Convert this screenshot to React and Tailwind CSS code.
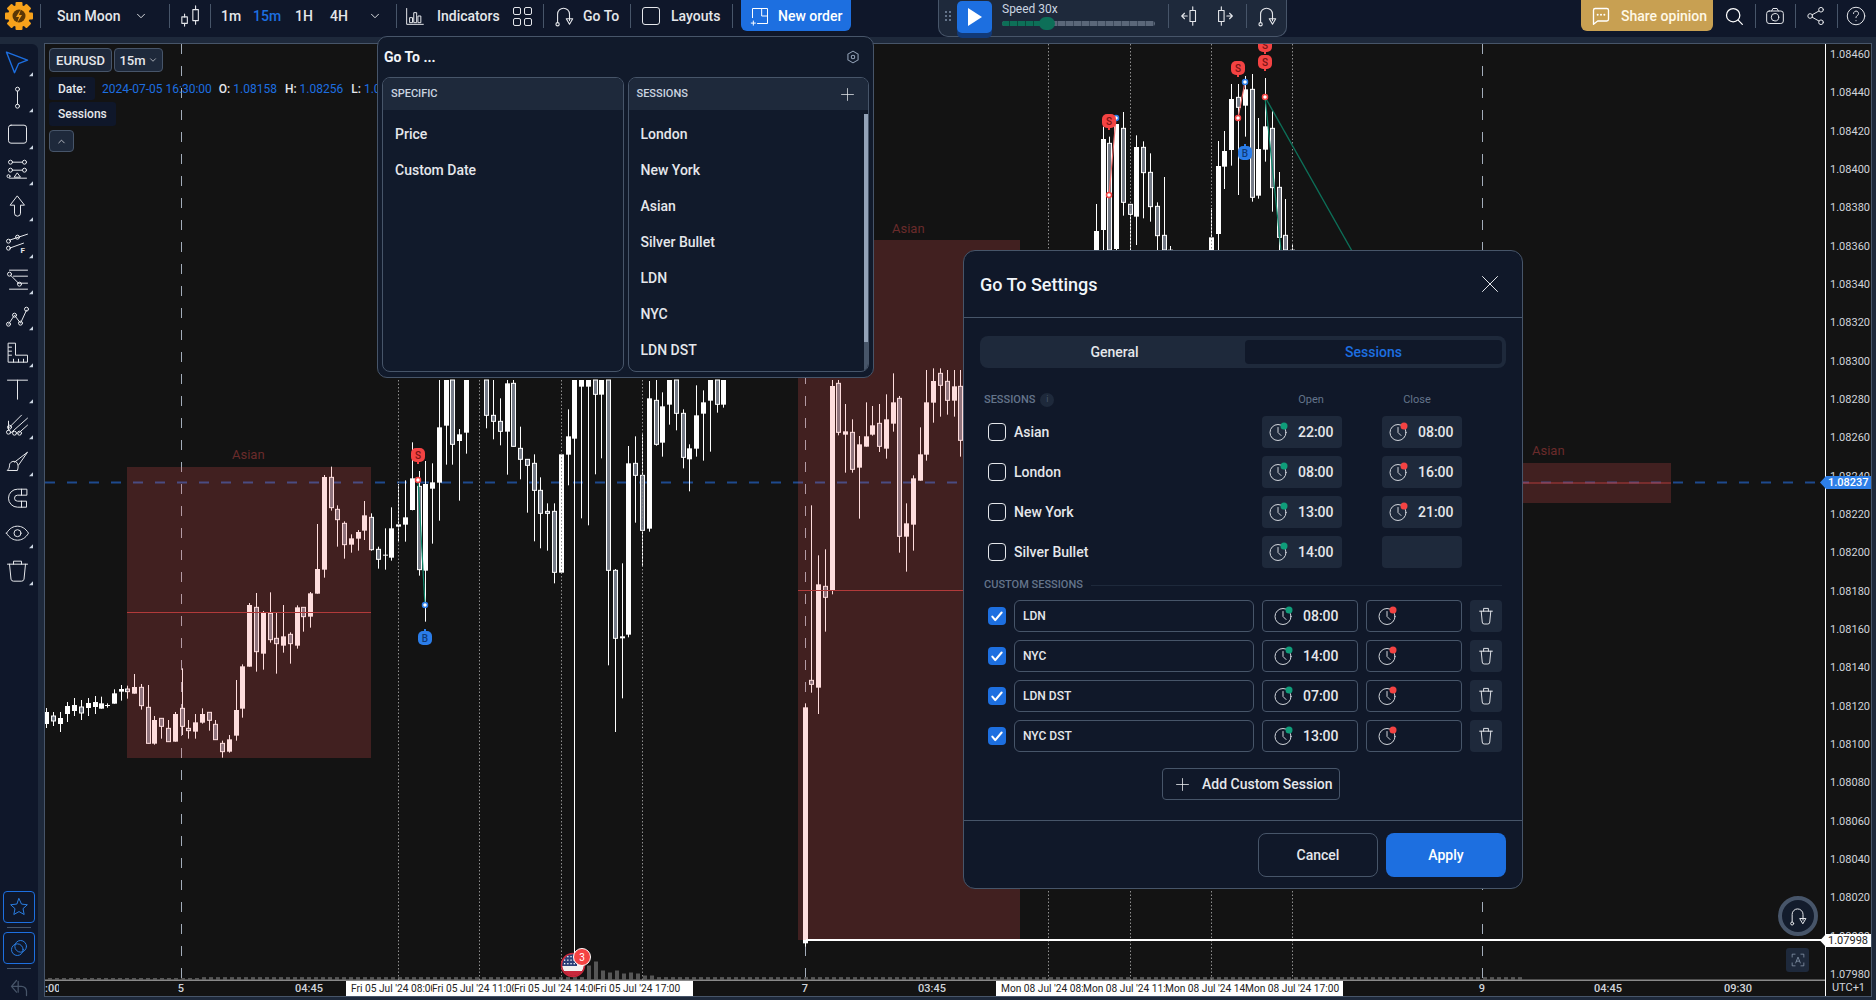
import React from "react";

const NAVY = "bg-[#0f172a]";

/* ---------- chart data: [x, bodyTop, bodyBottom, wickTop, wickBottom, hollow] in crop coords ---------- */
const A = [
  [2,850,866,830,866],[22,855,858,850,863],[43,820,851,808,851],[64,807,815,795,842],[82,807,815,797,836,1],[103,801,821,762,821],
  [124,802,857,792,869,1],[145,862,970,795,970,1],[163,900,971,888,974],[184,895,919,895,956,1],[205,925,965,900,965,1],[226,882,965,876,965],
  [247,865,919,745,945,1],[265,925,932,900,956,1],[286,907,935,882,956],[307,882,908,865,911],[328,877,901,877,932,1],[346,913,959,900,959,1],
  [367,970,995,962,1013,1],[388,958,995,945,998],[409,870,947,780,962],[427,739,866,733,893],[448,555,740,549,740],[469,562,695,519,755,1],
  [490,578,701,573,749],[511,580,659,517,668,1],[529,655,671,579,761,1],[550,649,677,555,698],[571,643,671,637,731,1],[592,562,677,556,686],
  [610,562,590,562,635,1],[631,520,590,516,623],[652,447,521,312,521],[673,171,449,165,473],[694,172,263,140,272,1],[712,268,299,256,380,1],
  [733,310,374,304,416,1],[754,355,374,343,398],[775,336,356,330,392],[793,286,332,243,360],[814,292,389,280,392,1],[835,388,418,380,446,1],
  [856,404,407,325,449],[874,325,413,262,422],[895,313,320,192,365],[916,292,314,181,365],[937,175,270,67,271],[958,199,449,153,467,1],
  [976,192,452,123,605],[997,187,206,130,371],[1018,22,188,-120,302],[1039,-120,17,-120,134],[1057,-120,73,-120,134,1],[1078,43,63,27,242],[1099,-120,38,-120,101],
];
const B = [
  [19,0,106,0,145,1],[40,106,124,0,178,1],[61,124,154,55,196,1],[82,10,155,0,284],[100,10,199,0,199,1],[121,205,238,140,298,1],[142,238,256,238,398,1],
  [163,250,331,223,484,1],[181,331,400,292,505,1],[202,394,400,370,512,1],[223,394,577,370,610,1],[244,223,578,223,578],[265,169,224,88,316],
  [283,0,176,0,1725],[304,0,20,0,415],[325,0,20,0,436],[346,0,43,0,283,1],[364,0,44,0,235],[385,0,571,0,856,1],[406,571,775,567,1056,1],
  [427,769,775,550,955],[445,250,764,198,772],[466,250,286,169,428,1],[487,286,451,163,559,1],[508,55,446,3,455],[529,61,193,0,197,1],
  [547,79,188,37,230],[568,0,74,0,134],[589,0,100,0,151,1],[610,100,232,88,265,1],[628,205,238,193,334],[649,106,206,16,230],[670,67,101,31,242],
  [691,0,62,0,215],[712,0,73,0,98,1],[730,0,74,0,83],
  [976,982,1690,970,1700],[994,901,913,376,938,1],[1015,613,923,526,1002],[1036,619,652,508,755,1],[1057,18,631,0,643],[1075,10,157,0,166,1],
  [1096,154,164,72,278],[1117,157,268,118,278,1],[1138,193,263,168,416],[1159,169,200,67,200],[1177,136,164,78,167],[1198,130,199,72,216,1],
  [1219,118,206,43,236],[1240,67,131,-20,155],[1258,55,469,48,518,1],[1279,430,470,370,575],[1300,295,434,286,512],[1321,223,302,142,302],
  [1339,67,224,-30,242],[1360,3,68,-35,128],[1381,-20,16,-35,110,1],[1402,4,61,-30,104,1],[1423,19,62,-30,110],[1441,19,181,-30,230,1],
];
const C = [
  [109,603,660,522,660],[130,327,600,290,660],[148,340,660,320,660,1],[169,282,657,282,660],[190,295,517,246,557,1],[211,523,553,523,660,1],
  [229,351,560,316,645],[250,352,428,334,565,1],[271,427,530,370,575,1],[292,529,617,517,660,1],[313,616,660,441,660,1],[331,659,660,648,660],
  [454,622,660,534,660],[475,408,612,333,660],[493,363,410,303,477],[514,207,360,162,407],[535,202,232,162,495,1],[556,178,227,138,320],
  [577,178,502,132,515,1],[595,357,497,264,506],[616,289,359,144,395],[637,295,473,241,545,1],[658,472,622,426,660,1],[676,616,660,507,660,1],[697,659,660,644,660],
];
const EXTRA = [
  [46,712,724,708,728],[53,716,721,712,726,1],[60,718,724,712,732],[67,706,714,702,722],[74,705,711,698,716],[81,707,713,700,720,1],[88,703,708,698,716],[95,702,707,696,714],
];

function toFull(list, ox, oy) {
  return list.map(([x, t, b, wt, wb, h]) => [Math.round(ox + x / 3), oy + t / 3, oy + b / 3, oy + wt / 3, oy + wb / 3, h]);
}
const CANDLES = [...EXTRA, ...toFull(A, 100, 420), ...toFull(B, 480, 380), ...toFull(C, 1060, 30)];

function Candle({ c }) {
  const [x, t, b, wt, wb, h] = c;
  return (
    <g>
      <line x1={x + 0.5} x2={x + 0.5} y1={wt} y2={wb} stroke="#fff" strokeWidth="1" />
      {h ? (
        <rect x={x - 1.5} y={t} width={4} height={Math.max(b - t, 1)} fill="#767c88" stroke="#fff" strokeWidth="1" />
      ) : (
        <rect x={x - 2} y={t} width={5} height={Math.max(b - t, 1)} fill="#fff" />
      )}
    </g>
  );
}

const VOL = (() => {
  const special = { 587: 14, 594: 18, 601: 9, 608: 7, 615: 9, 622: 6, 629: 7, 636: 6, 643: 4, 650: 4, 425: 4, 432: 4, 439: 4, 1075: 8, 1082: 7, 1089: 7, 1096: 5, 1208: 5, 1215: 4, 1250: 5, 1264: 5, 1271: 4, 1278: 4 };
  const out = [];
  for (let x = 48; x < 1520; x += 7) {
    const s = special[x];
    const h = s || (x < 200 ? 1.5 : 2 + ((x * 13) % 7) * 0.4);
    out.push([x, h]);
  }
  return out;
})();

function Pin({ x, y, l, blue }) {
  const fill = blue ? "#2b7de9" : "#f44343";
  return (
    <g>
      <rect x={x - 7} y={y - 7} width="14" height="14" rx="5" fill={fill} />
      {blue ? <rect x={x - 1} y={y - 9} width="2" height="3" fill={fill} /> : <rect x={x - 1} y={y + 6} width="2" height="3" fill={fill} />}
      <text x={x} y={y + 3.5} textAnchor="middle" fontSize="10" fontWeight="500" fill={blue ? "#0f3a78" : "#7a1414"} fontFamily="Roboto">{l}</text>
    </g>
  );
}
function Dot({ x, y, blue }) {
  return <circle cx={x} cy={y} r="2.5" fill="#fff" stroke={blue ? "#2b7de9" : "#f44343"} strokeWidth="1.5" />;
}

function Box({ x, y, w, h, mid, lx, ly }) {
  return (
    <g>
      <rect x={x} y={y} width={w} height={h} fill="rgba(249,84,84,0.2)" />
      <line x1={x} x2={x + w} y1={mid} y2={mid} stroke="#b23a3a" strokeWidth="1" />
      <text x={lx} y={ly} fontSize="13" fill="#6a2b2b" fontFamily="Roboto">Asian</text>
    </g>
  );
}

function Chart() {
  return (
    <svg viewBox="45 44 1780 937" width="1780" height="937" className="block">
      <rect x="45" y="44" width="1780" height="937" fill="#131313" />
      {[181, 805, 1482].map((x) => (
        <line key={x} x1={x + 0.5} x2={x + 0.5} y1="44" y2="981" stroke="#a3adba" strokeDasharray="10 12" />
      ))}
      <line x1="45" x2="1825" y1="482.5" y2="482.5" stroke="#1e4a8e" strokeWidth="2" strokeDasharray="10 12" />
      {VOL.map(([x, h]) => (
        <rect key={x} x={x} y={979.5 - h} width="4" height={h} fill="#565656" />
      ))}
      {CANDLES.map((c, i) => (
        <Candle key={i} c={c} />
      ))}
      <Box x={127} y={467} w={244} h={291} mid={612.5} lx={232} ly={459} />
      <Box x={798} y={240} w={222} h={700} mid={590.5} lx={892} ly={233} />
      <Box x={1500} y={463} w={171} h={40} mid={483} lx={1532} ly={455} />
      {[398, 479, 561, 642, 1048, 1130, 1211, 1292].map((x) => (
        <line key={x} x1={x + 0.5} x2={x + 0.5} y1="44" y2="981" stroke="#8f8f8f" strokeDasharray="1.5 2" />
      ))}
      <line x1="418" y1="480" x2="425" y2="605" stroke="#0d8a6c" strokeWidth="1.2" />
      <line x1="1265" y1="97" x2="1352" y2="251" stroke="#0d6f58" strokeWidth="1.4" />
      <line x1="1265" y1="97" x2="1281" y2="250" stroke="#0d8a6c" strokeWidth="1.2" />
      <line x1="1116" y1="118" x2="1109" y2="195" stroke="#f0716f" strokeWidth="1.2" />
      <line x1="1245" y1="82" x2="1238" y2="118" stroke="#f0716f" strokeWidth="1.2" />
      <Dot x={418} y={480} />
      <Dot x={425} y={605} blue />
      <Dot x={1116} y={118} blue />
      <Dot x={1109} y={195} />
      <Dot x={1245} y={82} blue />
      <Dot x={1238} y={118} />
      <Dot x={1265} y={97} />
      <Pin x={418} y={455} l="S" />
      <Pin x={1109} y={121} l="S" />
      <Pin x={1238} y={68} l="S" />
      <Pin x={1265} y={62} l="S" />
      <Pin x={1265} y={45} l="S" />
      <Pin x={425} y={638} l="B" blue />
      <Pin x={1245} y={153} l="B" blue />
      <line x1="806" x2="1825" y1="940" y2="940" stroke="#fff" strokeWidth="2" />
      <line x1="45" x2="1825" y1="980.5" y2="980.5" stroke="#8a8a8a" strokeWidth="2" />
      <defs>
        <clipPath id="flag"><circle cx="573" cy="965" r="11" /></clipPath>
      </defs>
      <g clipPath="url(#flag)">
        <rect x="562" y="954" width="22" height="22" fill="#c8283c" />
        <rect x="562" y="966" width="22" height="5" fill="#f1f1f1" />
        <rect x="562" y="954" width="22" height="12" fill="#f1f1f1" />
        <rect x="562" y="954" width="15" height="12" fill="#2a3f77" />
        {[0, 1, 2, 3].map((i) => [0, 1, 2].map((j) => <rect key={`${i}${j}`} x={564 + i * 3.2} y={956 + j * 3.5} width="1.3" height="1.3" fill="#fff" />))}
      </g>
      <circle cx="573" cy="965" r="11.5" fill="none" stroke="#c8283c" strokeWidth="1.5" />
      <circle cx="582" cy="957" r="8.5" fill="#f44343" stroke="#fff" strokeWidth="1" />
      <text x="582" y="961" textAnchor="middle" fontSize="10" fill="#fff" fontFamily="Roboto">3</text>
    </svg>
  );
}

/* ---------- icons ---------- */
const S = ({ w = 20, h = 20, vb = "0 0 24 24", c = "#e5e7eb", sw = 1.2, children, className = "" }) => (
  <svg width={w} height={h} viewBox={vb} fill="none" stroke={c} strokeWidth={sw} strokeLinecap="round" strokeLinejoin="round" className={`shrink-0 ${className}`}>
    {children}
  </svg>
);
const GoToIcon = ({ w = 22, h = 24 }) => (
  <S w={w} h={h}>
    <circle cx="5" cy="21" r="1.8" />
    <path d="M5 19V10a6.5 6.5 0 0 1 13 0v7" />
    <path d="M14.5 15h7L18 21z" />
  </S>
);
const Logo = () => (
  <svg width="30" height="30" viewBox="0 0 30 30" className="shrink-0">
    {[0, 45, 90, 135].map((a) => (
      <rect key={a} x="11.5" y="1" width="7" height="28" rx="1" fill="#f7a21b" transform={`rotate(${a} 15 15)`} />
    ))}
    <circle cx="15" cy="15" r="11" fill="#f7a21b" />
    <circle cx="15" cy="15" r="6.5" fill="#5a3606" />
    <path d="M17 8l-5 8h3l-2 6 5-8h-3z" fill="#f7a21b" />
  </svg>
);
const Chev = ({ size = 14, up }) => (
  <S w={size} h={size} sw={1.6}>
    <path d={up ? "M6 15l6-6 6 6" : "M6 9l6 6 6-6"} />
  </S>
);
const ClockI = ({ dot }) => (
  <svg width="18" height="18" viewBox="0 0 18 18" fill="none" stroke="#d1d5db" strokeWidth="1" strokeLinecap="round" className="shrink-0 overflow-visible">
    <circle cx="9" cy="9.5" r="8" />
    <path d="M9 4.500v5l3 3" />
    <circle cx="15" cy="3" r="3.5" fill={dot === "g" ? "#0f9d7a" : "#f44343"} stroke="none" />
  </svg>
);
const Trash = ({ w = 18, h = 20 }) => (
  <S w={w} h={h} vb="0 0 20 24" sw={1.2}>
    <path d="M2 6h16M7 6V2.5h6V6M4 6l1.3 13.5a2.5 2.5 0 0 0 2.5 2.5h4.4a2.5 2.5 0 0 0 2.5-2.5L16 6" />
  </S>
);

const ToolIcon = ({ children, blue, noTri }) => (
  <svg width="38" height="36.35" viewBox="0 0 38 36" fill="none" stroke={blue ? "#1d6fe0" : "#e5e7eb"} strokeWidth="1" strokeLinecap="round" strokeLinejoin="round" className="block shrink-0">
    <g transform="translate(5.5 6)">{children}</g>
    {!noTri && <polygon points="33,28 29,32 33,32" fill="#cbd5e1" stroke="none" />}
  </svg>
);
const TOOLS = [
  <ToolIcon blue key="1"><path d="M1 2l21 8-9 3.5-4 9z" strokeWidth="1.4" /></ToolIcon>,
  <ToolIcon key="2"><circle cx="12" cy="3" r="2" /><circle cx="12" cy="20" r="2" /><path d="M12 5v13" /></ToolIcon>,
  <ToolIcon key="3"><rect x="3" y="2" width="18" height="18" rx="2.5" /></ToolIcon>,
  <ToolIcon key="4"><path d="M7 3h10M7 11h10M4 19h17" /><circle cx="5" cy="3" r="2" /><circle cx="19" cy="3" r="2" /><circle cx="5" cy="11" r="2" /><circle cx="19" cy="11" r="2" /><circle cx="3" cy="17" r="1.5" /><path d="M12 14l3 4H9z" /></ToolIcon>,
  <ToolIcon key="5"><path d="M12 1l7 9h-4v8a3 3 0 0 1-6 0v-8H5z" /></ToolIcon>,
  <ToolIcon key="6"><path d="M4 8L22 2M4 16L18 11" /><circle cx="3" cy="9" r="2" /><circle cx="12" cy="5" r="2" /><circle cx="3" cy="16" r="2" /><text x="15" y="21" fontSize="8" fontWeight="700" fill="#e5e7eb" stroke="none" fontFamily="Roboto">F</text></ToolIcon>,
  <ToolIcon key="7"><path d="M4 2h18M8 8h14M12 15h10M4 21h18M5 7l8 8" /><circle cx="4" cy="6" r="2" /><circle cx="14" cy="16" r="2" /></ToolIcon>,
  <ToolIcon key="8"><path d="M3 20l6-9 6 8 6-13" /><circle cx="3" cy="20" r="2" /><circle cx="9" cy="11" r="2" /><circle cx="15" cy="19" r="2" /><circle cx="21" cy="5" r="2" /></ToolIcon>,
  <ToolIcon key="9"><path d="M3 2h7v12h12v7H3zM3 6h3M3 10h3M3 14h3M8 21v-3M13 21v-3M18 21v-3" /></ToolIcon>,
  <ToolIcon key="10"><path d="M2 3h20M12 3v19" /></ToolIcon>,
  <ToolIcon key="11"><path d="M3 15L16 2M5 20L22 5M13 20l9-8M3 8v9" /><circle cx="3" cy="19" r="2" /><circle cx="9" cy="20" r="2" /><circle cx="14" cy="20" r="2" /><circle cx="4" cy="14" r="2" /></ToolIcon>,
  <ToolIcon key="12"><path d="M9 12L22 2l-9 13M2 20c1-1 2-2 2-5 0-3 4-5 7-3 2 2 2 5 1 8z" /></ToolIcon>,
  <ToolIcon noTri key="13"><path d="M21 3h-9a9 9 0 0 0 0 18h9v-6h-9a3 3 0 0 1 0-6h9zM16 3v6M16 15v6" /></ToolIcon>,
  <ToolIcon key="14"><path d="M1 11c3-5 7-7 11-7s8 2 11 7c-3 5-7 7-11 7s-8-2-11-7z" /><circle cx="12" cy="11" r="3.5" /></ToolIcon>,
  <ToolIcon key="15"><path d="M2 5h20M8 5V2h8v3M4 5l1.5 15a2.5 2.5 0 0 0 2.5 2h8a2.5 2.5 0 0 0 2.5-2L20 5" /></ToolIcon>,
];

const Dv = ({ className = "" }) => <div className={`w-px h-[24px] bg-[#475569] shrink-0 ${className}`} />;

function TopBar() {
  const t = "text-[14px] leading-none font-medium whitespace-nowrap shrink-0";
  const w = "text-[#e5e7eb]";
  return (
    <div className={`h-[37px] shrink-0 flex items-start ${NAVY}`}>
      <div className="w-[40px] h-[32px] flex items-center pl-[4px] shrink-0"><Logo /></div>
      <div className="h-[32px] flex items-center">
        <Dv />
        <span className={`${t} ${w} ml-[16px] w-[77px]`}>Sun Moon</span>
        <Chev />
        <Dv className="ml-[21px]" />
        <div className="ml-[10px]">
          <S w={22} h={24}>
            <rect x="2" y="13" width="6" height="7" /><path d="M5 10v3M5 20v3" />
            <rect x="14" y="5" width="6" height="12" /><path d="M17 1v4M17 17v4" />
          </S>
        </div>
        <Dv className="ml-[8px]" />
        <span className={`${t} ${w} ml-[10px] w-[32px]`}>1m</span>
        <span className={`${t} text-[#1d6fe0] w-[42px]`}>15m</span>
        <span className={`${t} ${w} w-[35px]`}>1H</span>
        <span className={`${t} ${w} w-[38px]`}>4H</span>
        <Chev />
        <Dv className="ml-[14px]" />
        <div className="ml-[8px]">
          <S w={20} h={24}>
            <path d="M2 3v19h20" /><rect x="6" y="14" width="3" height="6" /><rect x="11" y="8" width="3" height="12" /><rect x="16" y="12" width="3" height="8" />
          </S>
        </div>
        <span className={`${t} ${w} ml-[12px] w-[62px]`}>Indicators</span>
        <div className="ml-[14px] w-[19px] grid grid-cols-2 gap-[3px] shrink-0">
          {[0, 1, 2, 3].map((i) => <div key={i} className="w-[8px] h-[8px] border border-[#e5e7eb] rounded-[2px]" />)}
        </div>
        <Dv className="ml-[11px]" />
        <div className="ml-[9px]"><GoToIcon /></div>
        <span className={`${t} ${w} ml-[8px] w-[35px]`}>Go To</span>
        <Dv className="ml-[12px]" />
        <div className="ml-[11px] w-[18px] h-[18px] border border-[#e5e7eb] rounded-[3px] shrink-0" />
        <span className={`${t} ${w} ml-[11px] w-[49px]`}>Layouts</span>
        <Dv className="ml-[12px]" />
      </div>
      <div className="ml-[8px] w-[110px] h-[31px] rounded-b-[6px] bg-[#1d6fe0] flex items-center pl-[9px] shrink-0">
        <S w={20} h={22} c="#fff">
          <path d="M3 14V3h18v18H9" /><path d="M14 3v9h7" /><path d="M4 18v5M1.5 20.5h5" />
        </S>
        <span className="text-[14px] leading-none font-medium text-white ml-[8px] whitespace-nowrap">New order</span>
      </div>
      <div className="ml-[87px] w-[349px] h-[37px] rounded-b-[10px] border border-t-0 border-[#475569] bg-[#1e293b] flex items-start shrink-0">
        <div className="w-[18px] h-[32px] flex items-center justify-center">
          <div className="grid grid-cols-2 gap-[2px]">
            {[0, 1, 2, 3, 4, 5].map((i) => <div key={i} className="w-[2px] h-[2px] bg-[#64748b]" />)}
          </div>
        </div>
        <div className="w-[35px] h-[32px] mt-[1px] rounded-[5px] bg-[#1d6fe0] shadow-[0_5px_0_#123a78] flex items-center justify-center">
          <svg width="14" height="18" viewBox="0 0 14 18"><path d="M0 0l14 9-14 9z" fill="#fff" /></svg>
        </div>
        <div className="ml-[10px] w-[153px] pt-[3px]">
          <div className="text-[12px] leading-[13px] text-[#cbd5e1]">Speed 30x</div>
          <div className="mt-[5px] h-[5px] rounded-full bg-[repeating-linear-gradient(90deg,#5b6779_0_7px,#3b4759_7px_8px)] relative">
            <div className="h-[5px] w-[45px] rounded-l-full bg-[repeating-linear-gradient(90deg,#0d6f58_0_7px,#09493b_7px_8px)]" />
            <div className="absolute left-[37px] top-[-4px] w-[16px] h-[13px] rounded-full bg-[#0d6f58]" />
          </div>
        </div>
        <div className="h-[32px] flex items-center">
          <Dv className="ml-[13px]" />
          <div className="ml-[10px]">
            <S w={22} h={24}><rect x="12" y="6" width="6" height="12" /><path d="M15 2v4M15 18v4M9 12H3M6 9l-3 3 3 3" /></S>
          </div>
          <div className="ml-[13px]">
            <S w={22} h={24}><rect x="5" y="6" width="6" height="12" /><path d="M8 2v4M8 18v4M14 12h6M17 9l3 3-3 3" /></S>
          </div>
          <Dv className="ml-[10px]" />
          <div className="ml-[9px]"><GoToIcon /></div>
        </div>
      </div>
      <div className="ml-[294px] w-[132px] h-[31px] rounded-b-[6px] bg-[#c8a052] flex items-center pl-[10px] shrink-0">
        <S w={20} h={22} c="#fff" sw={1.6}>
          <path d="M3 5a2 2 0 0 1 2-2h14a2 2 0 0 1 2 2v11a2 2 0 0 1-2 2H8l-5 4z" />
          <path d="M8 10.5h.01M12 10.5h.01M16 10.5h.01" strokeWidth="2.4" />
        </S>
        <span className="ml-[10px] text-[14px] leading-none font-medium text-[#fff8e6] whitespace-nowrap">Share opinion</span>
      </div>
      <div className="h-[32px] flex items-center">
        <div className="ml-[11px]">
          <S w={20} h={20} c="#fff" sw={1.5}><circle cx="11" cy="11" r="8" /><path d="M17 17l5 5" /></S>
        </div>
        <Dv className="ml-[11px]" />
        <div className="ml-[9px]">
          <S w={20} h={20}><rect x="2" y="6" width="20" height="15" rx="3" /><circle cx="12" cy="13.5" r="4.5" /><path d="M8 6l1.5-3h5L16 6" /></S>
        </div>
        <Dv className="ml-[10px]" />
        <div className="ml-[10px]">
          <S w={20} h={20}><circle cx="5" cy="12" r="2.8" /><circle cx="18" cy="4.5" r="2.8" /><circle cx="18" cy="19.5" r="2.8" /><path d="M7.5 10.5l8-4.5M7.5 13.5l8 4.5" /></S>
        </div>
        <Dv className="ml-[11px]" />
        <div className="ml-[8px]">
          <S w={20} h={20}><circle cx="12" cy="12" r="10.5" /><path d="M9 9a3 3 0 1 1 4.5 2.6c-1 .6-1.5 1.2-1.5 2.4M12 17.5v.2" /></S>
        </div>
      </div>
    </div>
  );
}

function LeftBar() {
  return (
    <div className={`w-[38px] shrink-0 ${NAVY} rounded-tr-[6px] flex flex-col items-center mt-[1px]`}>
      <div className="flex flex-col items-center">{TOOLS}</div>
      <div className="mt-auto flex flex-col items-center">
        <div className="w-[32px] h-[32px] border border-[#1d6fe0] rounded-[4px] flex items-center justify-center">
          <S w={20} h={20} c="#2a7de1"><path d="M12 2l3 6.5 7 .8-5.2 4.7 1.4 7L12 17.5 5.8 21l1.4-7L2 9.3l7-.8z" /></S>
        </div>
        <div className="w-[24px] h-px bg-[#475569] my-[4px]" />
        <div className="w-[32px] h-[32px] border border-[#1d6fe0] rounded-[4px] flex items-center justify-center">
          <S w={20} h={20} c="#2a7de1"><circle cx="14" cy="10" r="7" /><circle cx="10" cy="14" r="7" /></S>
        </div>
        <div className="w-[24px] h-px bg-[#475569] my-[4px]" />
        <div className="h-[24px] mt-[3px] flex items-center">
          <S w={20} h={20} c="#475569" sw={1.5}><path d="M9 3L3 10l6 7M3 10h12a6 6 0 0 1 6 6v5M11 4v13" /></S>
        </div>
      </div>
    </div>
  );
}

const PRICES = Array.from({ length: 25 }, (_, i) => (1.0846 - i * 0.0002).toFixed(5));

function PriceAxis() {
  return (
    <div className="w-[46px] shrink-0 bg-[#131313] border-l border-white flex flex-col overflow-hidden relative">
      <div className="h-[937px] overflow-hidden">
        <div className="-mt-[8px]">
          {PRICES.map((p) => (
            <div key={p} className="h-[38.35px] flex items-center pl-[4px] text-[11px] text-[#d1d5db]">{p}</div>
          ))}
        </div>
      </div>
      <div className="h-[15px] flex items-center justify-center text-[11px] text-[#d1d5db]">UTC+1</div>
    </div>
  );
}

const TimeL = ({ x, children }) => (
  <span className="absolute top-0 h-[15px] leading-[15px] text-[11px] text-[#d1d5db] font-medium -translate-x-1/2 whitespace-nowrap" style={{ left: x - 45 }}>{children}</span>
);
const Crosshair = ({ left, right, items }) => (
  <div className="absolute top-0 h-[15px] bg-white flex overflow-hidden" style={{ left: left - 45, width: right - left }}>
    <div className="flex pl-[5px]">
      {items.map(([txt, w], i) => (
        <div key={i} className="overflow-hidden whitespace-nowrap text-[10.2px] leading-[15px] text-[#222]" style={{ width: w }}>{txt}</div>
      ))}
    </div>
  </div>
);

function TimeAxis() {
  return (
    <div className="relative h-[15px] bg-[#131313] overflow-hidden">
      <span className="absolute left-0 top-0 w-[14px] overflow-hidden text-[11px] leading-[15px] text-[#d1d5db] font-medium">:00</span>
      <TimeL x={181}>5</TimeL>
      <TimeL x={309}>04:45</TimeL>
      <TimeL x={805}>7</TimeL>
      <TimeL x={932}>03:45</TimeL>
      <TimeL x={1482}>9</TimeL>
      <TimeL x={1608}>04:45</TimeL>
      <TimeL x={1738}>09:30</TimeL>
      <Crosshair left={346} right={693} items={[["Fri 05 Jul '24 08:00", 81], ["Fri 05 Jul '24 11:00", 82], ["Fri 05 Jul '24 14:00", 81], ["Fri 05 Jul '24 17:00", 90]]} />
      <Crosshair left={996} right={1343} items={[["Mon 08 Jul '24 08:00", 82], ["Mon 08 Jul '24 11:00", 82], ["Mon 08 Jul '24 14:00", 80], ["Mon 08 Jul '24 17:00", 96]]} />
    </div>
  );
}

function Legend() {
  return (
    <div className="absolute left-[49px] top-[48px] flex flex-col items-start text-[12px] leading-none font-medium text-[#e5e7eb]">
      <div className="flex gap-[2px]">
        <div className="w-[63px] h-[24px] rounded-[4px] border border-[#475569] bg-[#1e293b] flex items-center justify-center text-[13px]">EURUSD</div>
        <div className="w-[49px] h-[24px] rounded-[4px] border border-[#475569] bg-[#1e293b] flex items-center justify-center gap-[2px] text-[13px]">15m <Chev size={10} /></div>
      </div>
      <div className="mt-[5px] h-[23px] w-[328px] overflow-hidden flex items-center">
        <div className={`w-[46px] h-[23px] ${NAVY} rounded-[3px] flex items-center pl-[9px] shrink-0`}>Date:</div>
        <span className="ml-[7px] text-[#1d6fe0] font-normal whitespace-nowrap">2024-07-05 16:30:00</span>
        <span className="ml-[7px]">O:</span><span className="ml-[3px] text-[#1d6fe0] font-normal">1.08158</span>
        <span className="ml-[8px]">H:</span><span className="ml-[3px] text-[#1d6fe0] font-normal">1.08256</span>
        <span className="ml-[8px]">L:</span><span className="ml-[3px] text-[#1d6fe0] font-normal whitespace-nowrap">1.08148</span>
      </div>
      <div className={`mt-[2px] w-[67px] h-[24px] ${NAVY} rounded-[3px] flex items-center pl-[9px]`}>Sessions</div>
      <div className="mt-[4px] w-[25px] h-[22px] rounded-[4px] border border-[#475569] bg-[#1e293b] flex items-center justify-center"><Chev size={11} up /></div>
    </div>
  );
}

function GoToPopup() {
  const Panel = ({ title, items, plus, scroll }) => (
    <div className="relative h-[295px] rounded-[8px] border border-[#475569] overflow-hidden">
      <div className="h-[32px] bg-[#1e293b] flex items-center justify-between pl-[8px] pr-[14px]">
        <span className="text-[11px] font-medium text-[#cbd5e1]">{title}</span>
        {plus && <S w={13} h={13} sw={1.4}><path d="M12 1v22M1 12h22" /></S>}
      </div>
      <div className="pt-[6px] pl-[12px]">
        {items.map((i) => (
          <div key={i} className="h-[36px] flex items-center text-[14px] font-medium text-[#e5e7eb]">{i}</div>
        ))}
      </div>
      {scroll && (
        <div className="absolute right-0 top-[36px] bottom-0 w-[4px] bg-[#475569]">
          <div className="h-[228px] bg-[#94a3b8]" />
        </div>
      )}
    </div>
  );
  return (
    <div className="absolute left-[377px] top-[36px] w-[497px] h-[342px] rounded-[10px] border border-[#475569] bg-[#111a2b] px-[4px]">
      <div className="h-[40px] flex items-center justify-between pl-[2px] pr-[9px]">
        <span className="text-[14px] font-bold text-[#f1f5f9]">Go To ...</span>
        <S w={14} h={14} c="#94a3b8" sw={1.8}><path d="M12 2l8.7 5v10L12 22l-8.7-5V7z" /><circle cx="12" cy="12" r="3" /></S>
      </div>
      <div className="grid grid-cols-2 gap-[4px]">
        <Panel title="SPECIFIC" items={["Price", "Custom Date"]} />
        <Panel title="SESSIONS" plus scroll items={["London", "New York", "Asian", "Silver Bullet", "LDN", "NYC", "LDN DST"]} />
      </div>
    </div>
  );
}

const Check = ({ on }) =>
  on ? (
    <div className="w-[18px] h-[18px] rounded-[4px] bg-[#1d6fe0] flex items-center justify-center shrink-0">
      <svg width="14" height="14" viewBox="0 0 24 24" fill="none" stroke="#fff" strokeWidth="3.5" strokeLinecap="round" strokeLinejoin="round"><path d="M4 13l5 6L20 6" /></svg>
    </div>
  ) : (
    <div className="w-[18px] h-[18px] rounded-[4px] border border-[#e5e7eb] shrink-0" />
  );

const FixedTime = ({ d, v }) => (
  <div className="w-[80px] h-[32px] rounded-[4px] bg-[#1e293b] flex items-center pl-[7px] shrink-0">
    {v && <ClockI dot={d} />}
    {v && <span className="ml-[11px] text-[14px] font-medium text-[#e5e7eb]">{v}</span>}
  </div>
);
const InputTime = ({ d, v, pad }) => (
  <div className={`w-[96px] h-[32px] rounded-[4px] border border-[#475569] flex items-center shrink-0 ${pad}`}>
    <ClockI dot={d} />
    {v && <span className="ml-[11px] text-[14px] font-medium text-[#e5e7eb]">{v}</span>}
  </div>
);

function SettingsModal() {
  const rows = [["Asian", "22:00", "08:00"], ["London", "08:00", "16:00"], ["New York", "13:00", "21:00"], ["Silver Bullet", "14:00", null]];
  const custom = [["LDN", "08:00"], ["NYC", "14:00"], ["LDN DST", "07:00"], ["NYC DST", "13:00"]];
  return (
    <div className="absolute left-[963px] top-[250px] w-[560px] h-[639px] rounded-[12px] border border-[#475569] bg-[#101829] flex flex-col">
      <div className="h-[67px] shrink-0 flex items-center justify-between pl-[16px] pr-[22px] border-b border-[#475569]">
        <span className="text-[18px] font-medium text-[#f1f5f9]">Go To Settings</span>
        <S w={20} h={20} c="#e5e7eb" sw={1.2}><path d="M3 3l18 18M21 3L3 21" /></S>
      </div>
      <div className="flex-1 pl-[16px] pr-[16px] pt-[18px]">
        <div className="h-[32px] rounded-[8px] bg-[#1e293b] p-[4px] grid grid-cols-[261px_1fr]">
          <div className="flex items-center justify-center text-[14px] font-medium text-[#e5e7eb]">General</div>
          <div className="flex items-center justify-center rounded-[4px] bg-[#101829] text-[14px] font-medium text-[#1d6fe0]">Sessions</div>
        </div>
        <div className="mt-[24px] h-[16px] flex items-center pl-[4px]">
          <span className="text-[11px] font-medium text-[#64748b]">SESSIONS</span>
          <div className="ml-[5px] w-[14px] h-[14px] rounded-full bg-[#1e293b] flex items-center justify-center text-[9px] text-[#475569]">i</div>
          <span className="ml-auto w-[80px] text-center text-[11px] text-[#64748b]">Open</span>
          <span className="ml-[26px] mr-[49px] w-[80px] text-center text-[11px] text-[#64748b]">Close</span>
        </div>
        <div className="mt-[8px] flex flex-col gap-[8px]">
          {rows.map(([n, o, c]) => (
            <div key={n} className="h-[32px] flex items-center pl-[8px] pr-[44px]">
              <Check />
              <span className="ml-[8px] flex-1 text-[14px] font-medium text-[#e5e7eb]">{n}</span>
              <FixedTime d="g" v={o} />
              <div className="w-[40px] shrink-0" />
              <FixedTime d="r" v={c} />
            </div>
          ))}
        </div>
        <div className="mt-[9px] h-[16px] flex items-center pl-[4px] pr-[4px]">
          <span className="text-[11px] font-medium text-[#64748b] whitespace-nowrap">CUSTOM SESSIONS</span>
          <div className="ml-[8px] flex-1 h-px bg-[#1e293b]" />
        </div>
        <div className="mt-[7px] flex flex-col gap-[8px]">
          {custom.map(([n, o]) => (
            <div key={n} className="h-[32px] flex items-center pl-[8px] pr-[4px]">
              <Check on />
              <div className="ml-[8px] w-[240px] h-[32px] rounded-[6px] border border-[#475569] flex items-center pl-[8px] text-[12px] font-medium text-[#e5e7eb] shrink-0">{n}</div>
              <div className="ml-[8px]"><InputTime d="g" v={o} pad="pl-[11px]" /></div>
              <div className="ml-[8px]"><InputTime d="r" pad="pl-[11px]" /></div>
              <div className="ml-[8px] w-[32px] h-[32px] rounded-[4px] bg-[#1e293b] flex items-center justify-center shrink-0"><Trash w={16} h={20} /></div>
            </div>
          ))}
        </div>
        <div className="mt-[16px] ml-[182px] w-[178px] h-[32px] rounded-[4px] border border-[#475569] flex items-center pl-[13px]">
          <S w={13} h={13} sw={1.5}><path d="M12 1v22M1 12h22" /></S>
          <span className="ml-[13px] text-[14px] font-medium text-[#e5e7eb] whitespace-nowrap">Add Custom Session</span>
        </div>
      </div>
      <div className="h-[68px] shrink-0 border-t border-[#475569] flex justify-end gap-[8px] pt-[12px] pr-[16px]">
        <div className="w-[120px] h-[44px] rounded-[8px] border border-[#475569] flex items-center justify-center text-[14px] font-medium text-[#e5e7eb]">Cancel</div>
        <div className="w-[120px] h-[44px] rounded-[8px] bg-[#1d6fe0] flex items-center justify-center text-[14px] font-medium text-white">Apply</div>
      </div>
    </div>
  );
}

export default function App() {
  return (
    <div className="relative w-[1876px] h-[1000px] overflow-hidden bg-[#1e293b] [font-family:Roboto,sans-serif] flex flex-col">
      <TopBar />
      <div className="h-[963px] flex pt-[6px]">
        <LeftBar />
        <div className="ml-[6px] w-[1828px] h-[954px] border border-[#475569] flex shrink-0">
          <div className="w-[1780px] shrink-0 flex flex-col">
            <Chart />
            <TimeAxis />
          </div>
          <PriceAxis />
        </div>
      </div>

      <Legend />
      <GoToPopup />
      <SettingsModal />

      {/* price tags over the axis */}
      <div className="absolute left-[1820px] top-[476px] w-[51px] h-[13px] bg-[#2e7fe8] pl-[8px] text-[11px] leading-[13px] font-medium text-white [clip-path:polygon(6px_0,100%_0,100%_100%,6px_100%,0_50%)]">1.08237</div>
      <div className="absolute left-[1820px] top-[934px] w-[51px] h-[13px] bg-white pl-[8px] text-[11px] leading-[13px] text-[#222] [clip-path:polygon(6px_0,100%_0,100%_100%,6px_100%,0_50%)]">1.07998</div>
      <div className="absolute left-[1778px] top-[896px] w-[40px] h-[40px] rounded-full border-[4px] border-[#475569] bg-[#131c2c] flex items-center justify-center">
        <GoToIcon w={20} h={22} />
      </div>
      <div className="absolute left-[1786px] top-[948px] w-[23px] h-[24px] rounded-[3px] bg-[#1e293b] flex items-center justify-center">
        <S w={14} h={14} c="#94a3b8"><path d="M2 7V2h5M17 2h5v5M22 17v5h-5M7 22H2v-5M8 17l4-10 4 10M9.5 14h5" /></S>
      </div>
    </div>
  );
}
